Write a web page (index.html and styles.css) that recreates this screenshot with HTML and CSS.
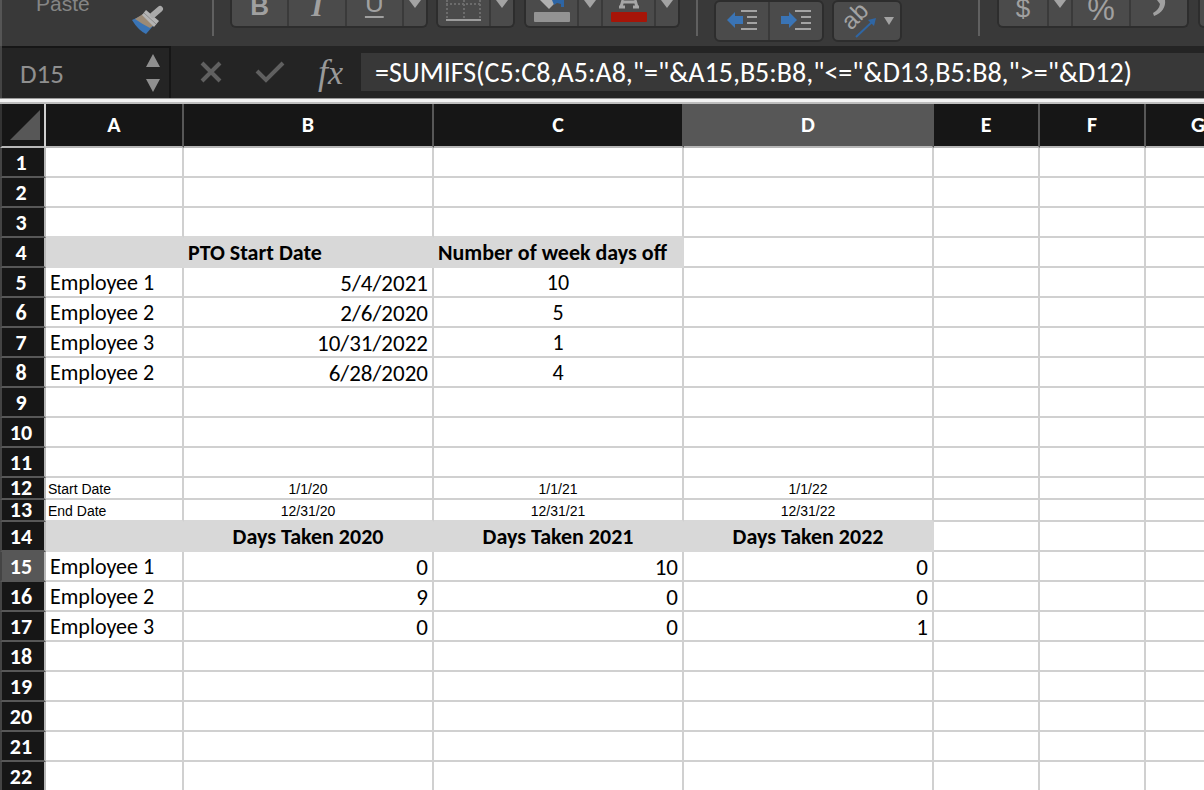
FILE: index.html
```html
<!DOCTYPE html>
<html lang="en">
<head>
<meta charset="utf-8">
<title>PTO tracker</title>
<link rel="stylesheet" href="styles.css">
</head>
<body>
<div class="app">
  <header class="ribbon">
    <div class="clipboard">
      <button class="paste">Paste</button>
      <button class="painter" aria-label="Format painter">
        <svg width="34" height="30" viewBox="0 0 34 30">
          <path d="M0 15 L11 10 L21 21 L14 29 Q6 25 0 15Z" fill="#3a74b5"/>
          <path d="M3 14 L11 9 L22 20 L18 23 Q10 19 3 14Z" fill="#9b8a76"/>
          <path d="M14 5 L27 16 L22 22 L10 10Z" fill="#b4b4b4"/>
          <path d="M12 8 L24 19" stroke="#8b8b8b" stroke-width="1"/>
          <path d="M21 10 L28 4" stroke="#a9a9a9" stroke-width="6" stroke-linecap="round"/>
        </svg>
      </button>
    </div>
    <i class="rule"></i>
    <div class="group cut fonts">
      <button class="letter bold">B</button>
      <button class="letter italic">I</button>
      <button class="letter under">U</button>
      <button class="drop" aria-label="Underline options"><svg width="12" height="8"><path d="M0 0H12L6 8Z"/></svg></button>
    </div>
    <div class="group cut borders">
      <button aria-label="Borders">
        <svg width="36" height="22" viewBox="0 0 36 22">
          <path d="M1 0V19M18 0V19M34 0V19M0 4H36" stroke="#6c6c6c" stroke-width="2" stroke-dasharray="2 2" fill="none"/>
          <path d="M0 20H35" stroke="#9c9c9c" stroke-width="2"/>
        </svg>
      </button>
      <button class="drop" aria-label="Border options"><svg width="12" height="8"><path d="M0 0H12L6 8Z"/></svg></button>
    </div>
    <div class="group cut colors">
      <button aria-label="Fill color">
        <svg width="38" height="24" viewBox="0 0 38 24">
          <path d="M7 0H25L16 9Z" fill="#b0b0b0"/>
          <path d="M19 0H31V7H28V4L24 3L21 5Z" fill="#2d65a5"/>
          <rect x="1" y="12" width="36" height="10" rx="1" fill="#939393"/>
        </svg>
      </button>
      <button class="drop" aria-label="Fill options"><svg width="12" height="8"><path d="M0 0H12L6 8Z"/></svg></button>
      <button aria-label="Font color">
        <svg width="38" height="24" viewBox="0 0 38 24">
          <path d="M13 0L11 7M25 0L27 7M13 2H25M9 7H15M23 7H29" stroke="#a6a6a6" stroke-width="3" fill="none"/>
          <rect x="1" y="12" width="36" height="10" rx="1" fill="#a61508"/>
        </svg>
      </button>
      <button class="drop" aria-label="Font color options"><svg width="12" height="8"><path d="M0 0H12L6 8Z"/></svg></button>
    </div>
    <i class="rule"></i>
    <div class="group indents">
      <button aria-label="Decrease indent">
        <svg width="32" height="24" viewBox="0 0 32 24">
          <path d="M1 11L9 3V7H17V15H9V19Z" fill="#3a74b5"/>
          <path d="M15 2H31M21 8H31M21 14H31M15 20H31" stroke="#a3a3a3" stroke-width="2"/>
        </svg>
      </button>
      <button aria-label="Increase indent">
        <svg width="32" height="24" viewBox="0 0 32 24">
          <path d="M17 11L9 3V7H1V15H9V19Z" fill="#3a74b5"/>
          <path d="M15 2H31M21 8H31M21 14H31M15 20H31" stroke="#a3a3a3" stroke-width="2"/>
        </svg>
      </button>
    </div>
    <div class="group orient">
      <button aria-label="Orientation">
        <svg width="56" height="36" viewBox="0 0 56 36">
          <text class="ab" transform="translate(12 28) rotate(-45)">ab</text>
          <path d="M17 34L33 19" stroke="#2f66a4" stroke-width="2"/>
          <path d="M29 17L37 15L35 23Z" fill="#2f66a4"/>
          <path d="M45 14H55L50 22Z" fill="#a3a3a3"/>
        </svg>
      </button>
    </div>
    <i class="rule"></i>
    <div class="group cut numbers">
      <button class="letter currency">$</button>
      <button class="drop" aria-label="Currency options"><svg width="12" height="8"><path d="M0 0H12L6 8Z"/></svg></button>
      <button class="letter percent">%</button>
      <button aria-label="Comma style">
        <svg width="14" height="18" viewBox="0 0 14 18"><path d="M5 0H13C14 7 10 13 2 16L1 13Q7 10 8 4Z" fill="#a0a0a0"/></svg>
      </button>
    </div>
    <div class="group cut more"><button aria-label="Increase decimal"></button></div>
  </header>

  <div class="formula-bar">
    <div class="name-box">
      <input class="cell-ref" aria-label="Name box" value="D15">
      <svg width="14" height="38" viewBox="0 0 14 38"><path d="M7 0L14 13H0ZM0 25H14L7 38Z" fill="#8f8f8f"/></svg>
    </div>
    <div class="actions">
      <button aria-label="Cancel"><svg width="22" height="22" viewBox="0 0 22 22"><path d="M2 2L20 20M20 2L2 20" stroke="#606060" stroke-width="4"/></svg></button>
      <button aria-label="Enter"><svg width="30" height="22" viewBox="0 0 30 22"><path d="M2 10L11 19L28 2" stroke="#606060" stroke-width="4" fill="none"/></svg></button>
      <button class="fx" aria-label="Insert function">f<span>x</span></button>
    </div>
    <input class="formula" aria-label="Formula" value='=SUMIFS(C5:C8,A5:A8,"="&amp;A15,B5:B8,"&lt;="&amp;D13,B5:B8,"&gt;="&amp;D12)'>
  </div>
  <div class="divider"></div>

  <main class="sheet">
    <table class="grid">
      <colgroup><col class="c-num"><col class="c-a"><col class="c-wide"><col class="c-wide"><col class="c-wide"><col class="c-std"><col class="c-std"><col class="c-std"></colgroup>
      <thead>
        <tr><th class="corner"><svg width="30" height="30" viewBox="0 0 30 30"><path d="M30 0V30H0Z" fill="#575757"/></svg></th><th>A</th><th>B</th><th>C</th><th class="active">D</th><th>E</th><th>F</th><th>G</th></tr>
      </thead>
      <tbody>
        <tr><th>1</th><td></td><td></td><td></td><td></td><td></td><td></td><td></td></tr>
        <tr><th>2</th><td></td><td></td><td></td><td></td><td></td><td></td><td></td></tr>
        <tr><th>3</th><td class="above"></td><td class="above"></td><td class="above"></td><td></td><td></td><td></td><td></td></tr>
        <tr><th>4</th><td class="head"></td><td class="head">PTO Start Date</td><td class="head">Number of week days off</td><td></td><td></td><td></td><td></td></tr>
        <tr><th>5</th><td>Employee 1</td><td class="num">5/4/2021</td><td class="mid">10</td><td></td><td></td><td></td><td></td></tr>
        <tr><th>6</th><td>Employee 2</td><td class="num">2/6/2020</td><td class="mid">5</td><td></td><td></td><td></td><td></td></tr>
        <tr><th>7</th><td>Employee 3</td><td class="num">10/31/2022</td><td class="mid">1</td><td></td><td></td><td></td><td></td></tr>
        <tr><th>8</th><td>Employee 2</td><td class="num">6/28/2020</td><td class="mid">4</td><td></td><td></td><td></td><td></td></tr>
        <tr><th>9</th><td></td><td></td><td></td><td></td><td></td><td></td><td></td></tr>
        <tr><th>10</th><td></td><td></td><td></td><td></td><td></td><td></td><td></td></tr>
        <tr><th>11</th><td></td><td></td><td></td><td></td><td></td><td></td><td></td></tr>
        <tr class="small"><th>12</th><td>Start Date</td><td class="mid">1/1/20</td><td class="mid">1/1/21</td><td class="mid">1/1/22</td><td></td><td></td><td></td></tr>
        <tr class="small"><th>13</th><td class="above">End Date</td><td class="mid above">12/31/20</td><td class="mid above">12/31/21</td><td class="mid above">12/31/22</td><td></td><td></td><td></td></tr>
        <tr><th>14</th><td class="head"></td><td class="head mid">Days Taken 2020</td><td class="head mid">Days Taken 2021</td><td class="head mid">Days Taken 2022</td><td></td><td></td><td></td></tr>
        <tr><th class="active">15</th><td>Employee 1</td><td class="num">0</td><td class="num">10</td><td class="num">0</td><td></td><td></td><td></td></tr>
        <tr><th>16</th><td>Employee 2</td><td class="num">9</td><td class="num">0</td><td class="num">0</td><td></td><td></td><td></td></tr>
        <tr><th>17</th><td>Employee 3</td><td class="num">0</td><td class="num">0</td><td class="num">1</td><td></td><td></td><td></td></tr>
        <tr><th>18</th><td></td><td></td><td></td><td></td><td></td><td></td><td></td></tr>
        <tr><th>19</th><td></td><td></td><td></td><td></td><td></td><td></td><td></td></tr>
        <tr><th>20</th><td></td><td></td><td></td><td></td><td></td><td></td><td></td></tr>
        <tr><th>21</th><td></td><td></td><td></td><td></td><td></td><td></td><td></td></tr>
        <tr><th>22</th><td></td><td></td><td></td><td></td><td></td><td></td><td></td></tr>
      </tbody>
    </table>
  </main>
</div>
</body>
</html>
```

FILE: styles.css
```css
* { box-sizing: border-box; }
body { margin: 0; background: #fff; font-family: Carlito, Lato, sans-serif; }
button { background: none; border: 0; padding: 0; margin: 0; color: #a0a0a0; font-family: "Liberation Sans", sans-serif; }
input { border: 0; padding: 0; margin: 0; min-width: 0; background: none; font-family: inherit; }
svg { display: block; }
.app { height: 100vh; display: flex; flex-direction: column; overflow: hidden; }

.ribbon { flex: none; display: flex; align-items: flex-start; height: 46px; overflow: hidden; background: #393939; border-left: 2px solid #555; }
.clipboard { display: flex; flex: none; width: 210px; padding-left: 34px; gap: 40px; }
.paste { font-size: 21px; line-height: 24px; height: 24px; margin-top: -8px; color: #858585; }
.painter { margin: 5px 0 0 2px; }
.rule { flex: none; width: 2px; height: 36px; background: #606060; }
.group { flex: none; display: flex; height: 42px; background: #4b4b4b; border: 2px solid #2d2d2d; border-radius: 6px; overflow: hidden; }
.group button { flex: 1; display: flex; justify-content: center; align-items: center; border-left: 2px solid #3a3a3a; }
.group button:first-child { border-left: 0; }
.group.cut { height: 28px; border-top: 0; border-radius: 0 0 6px 6px; }
.group.cut button { align-items: flex-start; }
.group .drop { flex: none; width: 24px; fill: #a3a3a3; }
.fonts { width: 198px; margin-left: 16px; }
.borders { width: 79px; margin-left: 8px; }
.colors { width: 156px; margin-left: 9px; margin-right: 16px; }
.indents { width: 110px; margin-left: 16px; }
.orient { width: 70px; margin-left: 8px; margin-right: 76px; }
.numbers { width: 192px; margin-left: 17px; }
.more { width: 60px; margin-left: 9px; }
.group .letter { font-size: 26px; line-height: 28px; }
.group .bold { font-weight: 700; }
.group.cut .letter { align-items: flex-end; padding-bottom: 6px; }
.group .italic { font-family: "Liberation Serif", serif; font-style: italic; font-weight: 700; font-size: 30px; }
.group.cut .under { text-decoration: underline; text-decoration-thickness: 2px; text-underline-offset: 4px; padding-bottom: 9px; }
.group.numbers .currency { flex: none; width: 48px; padding-bottom: 4px; }
.group.numbers .percent { font-size: 31px; padding-bottom: 2px; }
.ab { font: 24px "Liberation Sans", sans-serif; fill: #a3a3a3; }

.formula-bar { flex: none; display: flex; align-items: center; height: 52px; background: #242424; border-left: 2px solid #444; }
.name-box { flex: none; display: flex; align-items: center; justify-content: space-between; width: 169px; height: 52px; padding: 0 9px 0 18px; border-top: 2px solid #161616; border-right: 2px solid #161616; }
.cell-ref { width: 90px; height: 36px; font-size: 27px; color: #8f8f8f; }
.actions { flex: none; display: flex; align-items: center; gap: 33px; width: 190px; padding-left: 29px; }
.fx { font-family: "Liberation Serif", serif; font-style: italic; font-size: 36px; line-height: 38px; color: #999; white-space: nowrap; }
.fx span { font-size: 34px; }
.formula { flex: 1; height: 38px; padding: 0 0 0 14px; background: #383838; color: #fff; font-size: 28px; }
.divider { flex: none; height: 6px; background: #f2f2f2; border-top: 1px solid #999; border-bottom: 2px solid #bdbdbd; }

.sheet { flex: 1; overflow: hidden; min-height: 0; }
.grid { table-layout: fixed; width: 1252px; border-collapse: separate; border-spacing: 0; }
.c-num { width: 46px; }
.c-a { width: 138px; }
.c-wide { width: 250px; }
.c-std { width: 106px; }
.grid td, .grid th { height: 30px; padding: 2px 4px 0; border-right: 2px solid #d0d0d0; border-bottom: 2px solid #d0d0d0; font-size: 22px; line-height: 26px; white-space: nowrap; text-align: left; color: #000; }
.grid th { text-align: center; color: #fff; background: #161616; font-weight: 700; }
.grid thead th { height: 44px; padding-top: 0; border-right-color: #575757; border-bottom-color: #b8b8b8; }
.grid tbody th { padding: 2px 4px 0 0; border-left: 2px solid #444; border-bottom-color: #575757; border-right-color: #b8b8b8; }
.grid thead .corner { padding: 0 4px 0 8px; border-left: 2px solid #333; border-right-color: #d0d0d0; }
.grid .active, .grid tbody .active { background: #575757; }
.grid td.num { text-align: right; font-size: 23px; }
.grid td.mid { text-align: center; }
.grid td.head { background: #d8d8d8; border-color: #d8d8d8; font-weight: 700; }
.grid td.above { border-bottom-color: #d8d8d8; }
.grid .small th { height: 22px; line-height: 20px; padding-top: 0; }
.grid .small td { height: 22px; font-family: "Liberation Sans", sans-serif; font-size: 14px; line-height: 18px; padding: 2px 2px 0; }
```
